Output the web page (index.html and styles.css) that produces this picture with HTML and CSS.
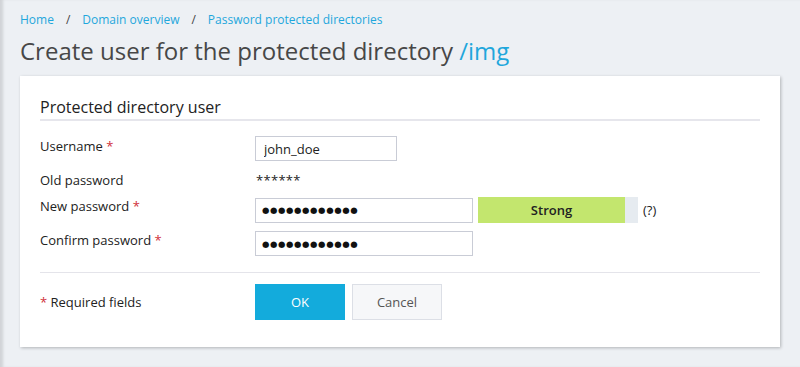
FILE: index.html
```html
<!DOCTYPE html>
<html>
<head>
<meta charset="utf-8">
<link rel="stylesheet" href="styles.css">
</head>
<body>
<div class="page">
  <nav class="crumbs">
    <a>Home</a><span class="sep">/</span><a>Domain overview</a><span class="sep">/</span><a>Password protected directories</a>
  </nav>
  <h1 class="title">Create user for the protected directory <span class="hl">/img</span></h1>
  <div class="card">
    <h2 class="section">Protected directory user</h2>
    <div class="row r-user">
      <div class="label">Username <span class="req">*</span></div>
      <div class="field"><input class="input short" type="text" value="john_doe"></div>
    </div>
    <div class="row r-old">
      <div class="label">Old password</div>
      <div class="field stars">******</div>
    </div>
    <div class="row r-new">
      <div class="label">New password <span class="req">*</span></div>
      <div class="field">
        <input class="input long dots" type="text" value="●●●●●●●●●●●●">
        <div class="meter"><div class="meter-fill" style="width:147px">Strong</div></div>
        <span class="help">(?)</span>
      </div>
    </div>
    <div class="row r-confirm">
      <div class="label">Confirm password <span class="req">*</span></div>
      <div class="field"><input class="input long dots" type="text" value="●●●●●●●●●●●●"></div>
    </div>
    <div class="actions">
      <div class="label"><span class="req">*</span> Required fields</div>
      <div class="buttons">
        <button class="btn primary">OK</button>
        <button class="btn">Cancel</button>
      </div>
    </div>
  </div>
</div>
</body>
</html>
```
FILE: styles.css
```css
html, body {
  margin: 0;
  padding: 0;
}
body {
  background: #edf0f4;
  font-family: "Open Sans", "Liberation Sans", sans-serif;
  color: #222;
  height: 367px;
  overflow: hidden;
  box-shadow: inset 4px 0 3px -1px rgba(0,0,0,0.12);
}
.page {
  padding: 10px 20px 0 20px;
}
.crumbs {
  font-size: 12px;
  line-height: 20px;
  color: #1fa7dc;
}
.crumbs a {
  color: #1fa7dc;
}
.crumbs .sep {
  color: #444;
  margin: 0 12px 0 12px;
}
.title {
  margin: 3px 0 0 0;
  font-weight: 400;
  font-size: 24px;
  line-height: 36px;
  color: #474747;
}
.title .hl {
  color: #1fa7dc;
}
.card {
  margin-top: 7px;
  background: #fff;
  width: 720px;
  padding: 20px 20px 27px 20px;
  box-shadow: 1px 1px 3px rgba(0,0,0,0.25);
}
.section {
  margin: 0;
  font-weight: 400;
  font-size: 16px;
  line-height: 22px;
  color: #222;
  padding-bottom: 1px;
  border-bottom: 2px solid #e6e6ec;
}
.row {
  display: flex;
  align-items: flex-start;
}
.label {
  width: 215px;
  font-size: 13px;
  line-height: 18px;
  color: #222;
  flex: none;
}
.req {
  color: #d0303a;
}
.field {
  display: flex;
  align-items: center;
}
.r-user { margin-top: 15px; height: 25px; }
.r-user .label { padding-top: 1px; }
.r-old { margin-top: 8px; height: 22px; }
.r-old .label { padding-top: 2px; }
.r-new { margin-top: 6px; height: 26px; }
.r-confirm { margin-top: 8px; height: 26px; }
.input {
  box-sizing: border-box;
  height: 25px;
  border: 1px solid #c9ccd6;
  padding: 0 8px;
  font-family: "Open Sans", "Liberation Sans", sans-serif;
  font-size: 13px;
  color: #222;
  background: #fff;
  margin: 0;
  outline: none;
}
.input.short { width: 142px; }
.input.long { width: 218px; }
.input.dots {
  font-family: "DejaVu Sans", sans-serif;
  font-size: 8.5px;
  letter-spacing: 0.6px;
  color: #111;
  padding-left: 6px;
}
.stars {
  font-size: 13px;
  padding-left: 1px;
  padding-top: 2px;
  line-height: 18px;
  letter-spacing: 0.3px;
}
.meter {
  margin-left: 5px;
  width: 160px;
  height: 26px;
  background: #e6ebf0;
}
.meter-fill {
  height: 26px;
  background: #c3e66e;
  font-size: 13px;
  font-weight: 600;
  line-height: 26px;
  text-align: center;
  color: #222;
}
.help {
  margin-left: 5px;
  font-size: 13px;
  color: #222;
}
.actions {
  margin-top: 15px;
  border-top: 1px solid #e4e4ea;
  padding-top: 11px;
  display: flex;
  align-items: center;
}
.buttons {
  display: flex;
  gap: 7px;
}
.btn {
  box-sizing: border-box;
  width: 90px;
  height: 36px;
  border: 1px solid #dcdfe6;
  background: #f6f7f9;
  font-family: "Open Sans", "Liberation Sans", sans-serif;
  font-size: 13px;
  color: #555;
  padding: 0;
  margin: 0;
}
.btn.primary {
  background: #13abdc;
  border-color: #13abdc;
  color: #fff;
}
```
